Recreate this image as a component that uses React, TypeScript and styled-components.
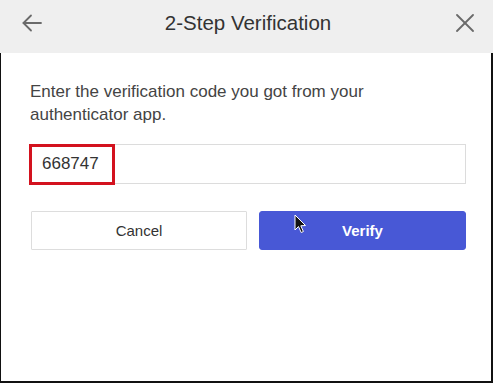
import styled, { createGlobalStyle } from 'styled-components';

const GlobalStyle = createGlobalStyle`
  html, body {
    margin: 0;
    padding: 0;
    background: #ffffff;
  }
  * {
    box-sizing: border-box;
  }
`;

const BackIcon = () => (
  <svg width="20" height="18" viewBox="0 0 20 18" fill="none" stroke="#6a6a6a" strokeWidth="1.8" strokeLinecap="round" strokeLinejoin="round">
    <path d="M19 9H1.5" />
    <path d="M9 1.5L1.5 9L9 16.5" />
  </svg>
);

const CloseIcon = () => (
  <svg width="18" height="18" viewBox="0 0 18 18" fill="none" stroke="#6a6a6a" strokeWidth="1.8" strokeLinecap="round">
    <path d="M1 1L17 17" />
    <path d="M17 1L1 17" />
  </svg>
);

const PointerIcon = () => (
  <svg width="13" height="20" viewBox="0 0 13 20">
    <path d="M1 1L1 16L4.5 12.5L7.2 18.5L9.4 17.5L6.8 11.8L11.5 11.5Z" fill="#111" stroke="#fff" strokeWidth="1" strokeLinejoin="round" />
  </svg>
);

export default function App() {
  return (
    <>
      <GlobalStyle />
      <Frame>
        <Header>
          <IconButton $align="start">
            <BackIcon />
          </IconButton>
          <Title>2-Step Verification</Title>
          <IconButton $align="end">
            <CloseIcon />
          </IconButton>
        </Header>
        <Body>
          <Prompt>Enter the verification code you got from your authenticator app.</Prompt>
          <InputWrap>
            <CodeInput defaultValue="668747" />
            <Highlight />
          </InputWrap>
          <ButtonRow>
            <Button $primary={false}>Cancel</Button>
            <Button $primary={true}>
              Verify
              <Cursor>
                <PointerIcon />
              </Cursor>
            </Button>
          </ButtonRow>
        </Body>
      </Frame>
    </>
  );
}

const Frame = styled.div`
  width: 493px;
  height: 383px;
  display: flex;
  flex-direction: column;
  font-family: 'Liberation Sans', Arial, sans-serif;
  background: #ffffff;
`;

const Header = styled.div`
  height: 53px;
  flex-shrink: 0;
  background: #efefef;
  display: grid;
  grid-template-columns: 60px 1fr 60px;
  align-items: center;
  padding: 0 19px 8px 22px;
`;

const IconButton = styled.div<{ $align: 'start' | 'end' }>`
  display: flex;
  justify-content: ${(props) => (props.$align === 'start' ? 'flex-start' : 'flex-end')};
  align-items: center;
  height: 20px;
`;

const Title = styled.div`
  text-align: center;
  font-size: 20.5px;
  color: #333333;
`;

const Body = styled.div`
  flex: 1;
  display: flex;
  flex-direction: column;
  padding: 27px 25px 0 28px;
  border-left: 1px solid #111;
  border-right: 2px solid #111;
  border-bottom: 2px solid #111;
`;

const Prompt = styled.p`
  margin: 0 0 18px 1px;
  font-size: 17px;
  line-height: 23px;
  color: #444444;
  max-width: 360px;
`;

const InputWrap = styled.div`
  position: relative;
  height: 40px;
`;

const CodeInput = styled.input`
  width: 100%;
  height: 40px;
  border: 1px solid #dcdcdc;
  border-radius: 0;
  outline: none;
  padding: 0 0 0 12px;
  font-family: 'Liberation Sans', Arial, sans-serif;
  font-size: 17px;
  color: #333333;
  background: #ffffff;
`;

const Highlight = styled.div`
  position: absolute;
  left: 0;
  top: 0;
  width: 86px;
  height: 41px;
  border: 3px solid #d3121e;
  pointer-events: none;
`;

const ButtonRow = styled.div`
  display: grid;
  grid-template-columns: 216px 1fr;
  gap: 12px;
  margin: 27px 0 0 2px;
`;

const Button = styled.div<{ $primary: boolean }>`
  position: relative;
  height: 39px;
  display: flex;
  align-items: center;
  justify-content: center;
  font-size: 15px;
  border-radius: ${(props) => (props.$primary ? '3px' : '1px')};
  border: 1px solid ${(props) => (props.$primary ? '#4858d6' : '#dddddd')};
  background: ${(props) => (props.$primary ? '#4858d6' : '#ffffff')};
  color: ${(props) => (props.$primary ? '#ffffff' : '#333333')};
  font-weight: ${(props) => (props.$primary ? 700 : 400)};
`;

const Cursor = styled.div`
  position: absolute;
  left: 34px;
  top: 2px;
  line-height: 0;
`;
